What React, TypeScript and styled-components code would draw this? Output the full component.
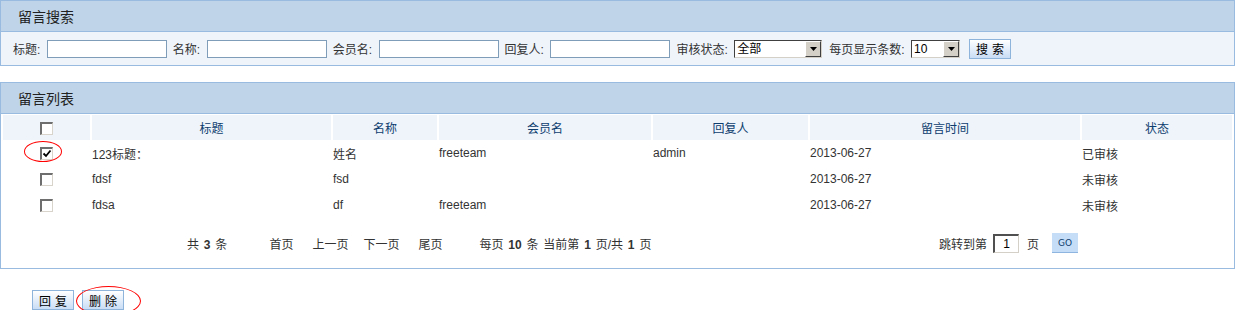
import React from 'react';
import styled, { createGlobalStyle } from 'styled-components';

const GlobalStyle = createGlobalStyle`
  body {
    margin: 0;
    background: #fff;
    font-family: "Liberation Sans", "Noto Sans CJK SC", sans-serif;
    font-size: 12px;
    color: #333;
  }
`;

const Page = styled.div`
  width: 1235px;
`;

const Panel = styled.div<{ $gap?: number }>`
  border: 1px solid #99bbe0;
  margin-top: ${(p) => p.$gap || 0}px;
`;

const PanelHead = styled.div`
  height: 30px;
  background: #bfd4e8;
  border-bottom: 1px solid #99bbe0;
  padding-left: 17px;
  display: flex;
  align-items: center;
  font-size: 14px;
  color: #222;
`;

const SearchBar = styled.div`
  height: 33px;
  background: #eff4fb;
  display: flex;
  align-items: center;
  padding-left: 12px;
`;

const Label = styled.span`
  margin-right: 6.5px;
  color: #333;
  white-space: nowrap;
`;

const TextInput = styled.input`
  width: 120px;
  height: 18px;
  box-sizing: border-box;
  border: 1px solid #7f9db9;
  background: #fff;
  margin: 0 6px 0 0;
  padding: 0 2px;
  font: inherit;
`;

const SelectBox = styled.div<{ $w: number }>`
  width: ${(p) => p.$w}px;
  height: 18px;
  box-sizing: border-box;
  display: flex;
  border-top: 1px solid #404040;
  border-left: 1px solid #404040;
  border-right: 1px solid #d4d0c8;
  border-bottom: 1px solid #d4d0c8;
  background: #fff;
  margin-right: 7px;
`;

const SelectValue = styled.span`
  flex: 1;
  padding-left: 2px;
  line-height: 16px;
  color: #000;
  font-size: 12px;
`;

const SelectArrow = styled.span`
  width: 16px;
  height: 16px;
  box-sizing: border-box;
  background: #d4d0c8;
  border-top: 1px solid #fff;
  border-left: 1px solid #fff;
  border-right: 1px solid #404040;
  border-bottom: 1px solid #404040;
  display: flex;
  align-items: center;
  justify-content: center;
`;

const BlueButton = styled.button<{ $left?: number }>`
  width: 42px;
  height: 20px;
  box-sizing: border-box;
  padding: 0;
  margin-left: ${(p) => p.$left || 0}px;
  border: 1px solid #8eb4dc;
  background: linear-gradient(#ffffff, #c9ddf5);
  font: inherit;
  font-size: 12px;
  color: #000;
  letter-spacing: 4px;
  text-indent: 4px;
  cursor: pointer;
`;

const Table = styled.table`
  width: 1233px;
  table-layout: fixed;
  border-collapse: separate;
  border-spacing: 2px 0;
  margin-top: 1px;
`;

const Th = styled.th`
  height: 25px;
  padding: 0;
  background: #eff4fb;
  color: #0d3d6e;
  font-weight: normal;
  text-align: center;
`;

const Td = styled.td<{ $center?: boolean }>`
  height: 26px;
  padding: 0;
  text-align: ${(p) => (p.$center ? 'center' : 'left')};
  color: #333;
`;

const CheckWrap = styled.span`
  position: relative;
  display: inline-block;
  vertical-align: middle;
`;

const Box = styled.span`
  display: block;
  width: 13px;
  height: 13px;
  box-sizing: border-box;
  border-top: 2px solid #6e6e6e;
  border-left: 2px solid #6e6e6e;
  border-right: 1px solid #d8d4cc;
  border-bottom: 1px solid #d8d4cc;
  background: #fff;
`;

const Ellipse = styled.span<{ $w: number; $h: number; $x: number; $y: number }>`
  position: absolute;
  left: ${(p) => p.$x}px;
  top: ${(p) => p.$y}px;
  width: ${(p) => p.$w}px;
  height: ${(p) => p.$h}px;
  box-sizing: border-box;
  border: 1px solid #f00;
  border-radius: 50%;
  pointer-events: none;
`;

const Pager = styled.div`
  height: 50px;
  display: flex;
  align-items: center;
  padding-left: 184px;
  padding-right: 154px;
  color: #333;
  word-spacing: 1.5px;
`;

const PagerItem = styled.span<{ $after: number }>`
  margin-right: ${(p) => p.$after}px;
  white-space: nowrap;
`;

const Spacer = styled.span`
  flex: 1;
`;

const PageInput = styled.input`
  width: 26px;
  height: 19px;
  box-sizing: border-box;
  border-top: 2px solid #505050;
  border-left: 2px solid #505050;
  border-right: 1px solid #d4d0c8;
  border-bottom: 1px solid #d4d0c8;
  text-align: center;
  font: inherit;
  color: #000;
  padding: 0;
  margin: 0 8px 0 6px;
`;

const GoButton = styled.button`
  width: 26px;
  height: 20px;
  border: none;
  border-bottom: 1px solid #8eb4e0;
  background: #c6ddf7;
  color: #0d3d6e;
  font-family: "DejaVu Sans", sans-serif;
  font-size: 9px;
  padding: 0;
  margin-left: 13px;
`;

const Actions = styled.div`
  display: flex;
  gap: 8px;
  padding: 21px 0 0 32px;
`;

function Check({ checked }: { checked?: boolean }) {
  return (
    <Box>
      {checked && (
        <svg width="10" height="10" viewBox="0 0 10 10" style={{ display: 'block' }}>
          <path d="M1.5 4.5 L4 7 L8.5 1.5" stroke="#000" strokeWidth="1.8" fill="none" />
        </svg>
      )}
    </Box>
  );
}

function FakeSelect({ w, value }: { w: number; value: string }) {
  return (
    <SelectBox $w={w}>
      <SelectValue>{value}</SelectValue>
      <SelectArrow>
        <svg width="7" height="4" viewBox="0 0 7 4">
          <path d="M0 0 H7 L3.5 4 Z" fill="#000" />
        </svg>
      </SelectArrow>
    </SelectBox>
  );
}

const rows = [
  { title: '123标题：', name: '姓名', member: 'freeteam', reply: 'admin', date: '2013-06-27', state: '已审核', checked: true },
  { title: 'fdsf', name: 'fsd', member: '', reply: '', date: '2013-06-27', state: '未审核' },
  { title: 'fdsa', name: 'df', member: 'freeteam', reply: '', date: '2013-06-27', state: '未审核' },
];

export default function App() {
  return (
    <Page>
      <GlobalStyle />
      <Panel>
        <PanelHead>留言搜索</PanelHead>
        <SearchBar>
          <Label>标题:</Label>
          <TextInput />
          <Label>名称:</Label>
          <TextInput />
          <Label>会员名:</Label>
          <TextInput />
          <Label>回复人:</Label>
          <TextInput />
          <Label>审核状态:</Label>
          <FakeSelect w={88} value="全部" />
          <Label>每页显示条数:</Label>
          <FakeSelect w={49} value="10" />
          <BlueButton $left={2}>搜索</BlueButton>
        </SearchBar>
      </Panel>

      <Panel $gap={16}>
        <PanelHead>留言列表</PanelHead>
        <Table>
          <colgroup>
            <col style={{ width: 87 }} />
            <col style={{ width: 239 }} />
            <col style={{ width: 104 }} />
            <col style={{ width: 212 }} />
            <col style={{ width: 155 }} />
            <col style={{ width: 270 }} />
            <col />
          </colgroup>
          <thead>
            <tr>
              <Th>
                <CheckWrap>
                  <Check />
                </CheckWrap>
              </Th>
              <Th>标题</Th>
              <Th>名称</Th>
              <Th>会员名</Th>
              <Th>回复人</Th>
              <Th>留言时间</Th>
              <Th>状态</Th>
            </tr>
          </thead>
          <tbody>
            {rows.map((r, i) => (
              <tr key={i}>
                <Td $center>
                  <CheckWrap>
                    <Check checked={r.checked} />
                    {r.checked && <Ellipse $w={38} $h={21} $x={-16} $y={-6} />}
                  </CheckWrap>
                </Td>
                <Td>{r.title}</Td>
                <Td>{r.name}</Td>
                <Td>{r.member}</Td>
                <Td>{r.reply}</Td>
                <Td>{r.date}</Td>
                <Td>{r.state}</Td>
              </tr>
            ))}
            <tr>
              <td colSpan={7} style={{ padding: 0 }}>
                <Pager>
                  <PagerItem $after={42}>
                    共 <b>3</b> 条
                  </PagerItem>
                  <PagerItem $after={19}>首页</PagerItem>
                  <PagerItem $after={15}>上一页</PagerItem>
                  <PagerItem $after={19}>下一页</PagerItem>
                  <PagerItem $after={37}>尾页</PagerItem>
                  <PagerItem $after={0}>
                    每页 <b>10</b> 条 当前第 <b>1</b> 页/共 <b>1</b> 页
                  </PagerItem>
                  <Spacer />
                  <PagerItem $after={0}>跳转到第</PagerItem>
                  <PageInput defaultValue="1" />
                  <PagerItem $after={0}>页</PagerItem>
                  <GoButton>GO</GoButton>
                </Pager>
              </td>
            </tr>
          </tbody>
        </Table>
      </Panel>

      <Actions>
        <BlueButton>回复</BlueButton>
        <CheckWrap>
          <BlueButton>删除</BlueButton>
          <Ellipse $w={65} $h={30} $x={-6} $y={-4} />
        </CheckWrap>
      </Actions>
    </Page>
  );
}
